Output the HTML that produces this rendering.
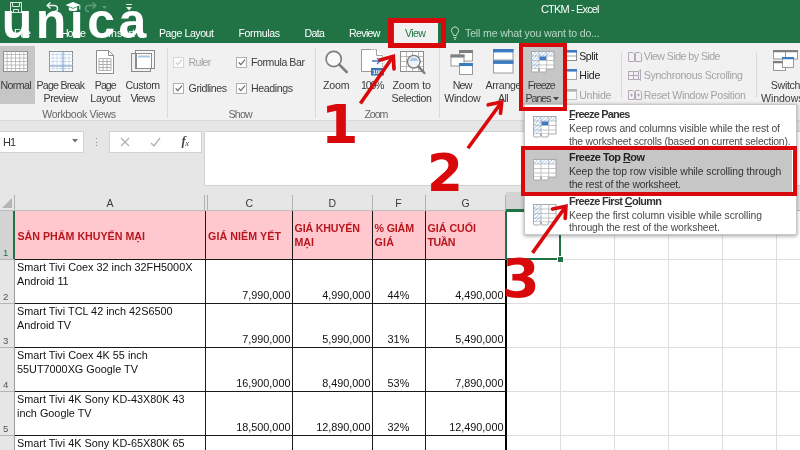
<!DOCTYPE html>
<html lang="vi"><head><meta charset="utf-8"><title>CTKM - Excel</title>
<style>
html,body{margin:0;padding:0}
body{width:800px;height:450px;overflow:hidden;position:relative;background:#fff;font-family:"Liberation Sans",sans-serif;color:#444}
.a{position:absolute}
.t{position:absolute;white-space:nowrap;line-height:1}
#wrap{position:absolute;left:0;top:0;width:800px;height:450px;overflow:hidden;filter:blur(.4px)}
svg{position:absolute;overflow:visible}
.vl{position:absolute;width:1px;background:#1a1a1a}
.hl{position:absolute;height:1px;background:#1a1a1a}
.gv{position:absolute;width:1px;background:#dedede}
.gh{position:absolute;height:1px;background:#dedede}
.sep{position:absolute;top:48px;width:1px;height:66px;background:#dadada}
.cb{position:absolute;width:9px;height:9px;border:1px solid #a6a6a6;background:#fdfdfd}
.red{position:absolute;border:4px solid #d9090b;box-sizing:border-box}
</style></head><body><div id="wrap">
<div class="a" style="left:0;top:211px;width:800px;height:239px;background:#fff"></div>
<div class="a" style="left:15px;top:211px;width:491px;height:48px;background:#ffc7ce"></div>
<div class="gv" style="left:560px;top:211px;height:239px"></div>
<div class="gv" style="left:614px;top:211px;height:239px"></div>
<div class="gv" style="left:668px;top:211px;height:239px"></div>
<div class="gv" style="left:722px;top:211px;height:239px"></div>
<div class="gv" style="left:776px;top:211px;height:239px"></div>
<div class="gh" style="left:506px;top:259px;width:294px"></div>
<div class="gh" style="left:506px;top:303px;width:294px"></div>
<div class="gh" style="left:506px;top:347px;width:294px"></div>
<div class="gh" style="left:506px;top:391px;width:294px"></div>
<div class="gh" style="left:506px;top:435px;width:294px"></div>
<div class="vl" style="left:205px;top:211px;height:239px"></div>
<div class="vl" style="left:292px;top:211px;height:239px"></div>
<div class="vl" style="left:372px;top:211px;height:239px"></div>
<div class="vl" style="left:425px;top:211px;height:239px"></div>
<div class="vl" style="left:505px;top:211px;height:239px;width:2px;background:#000"></div>
<div class="hl" style="left:15px;top:259px;width:491px"></div>
<div class="hl" style="left:15px;top:303px;width:491px"></div>
<div class="hl" style="left:15px;top:347px;width:491px"></div>
<div class="hl" style="left:15px;top:391px;width:491px"></div>
<div class="hl" style="left:15px;top:435px;width:491px"></div>
<div class="a" style="left:0;top:211px;width:14px;height:239px;background:#e6e6e6;border-right:1px solid #9b9b9b"></div>
<div class="a" style="left:0;top:211px;width:13px;height:48px;background:#d3d3d3;border-right:2px solid #217346"></div>
<div class="gh" style="left:0;top:259px;width:14px;background:#b5b5b5"></div>
<div class="gh" style="left:0;top:303px;width:14px;background:#b5b5b5"></div>
<div class="gh" style="left:0;top:347px;width:14px;background:#b5b5b5"></div>
<div class="gh" style="left:0;top:391px;width:14px;background:#b5b5b5"></div>
<div class="gh" style="left:0;top:435px;width:14px;background:#b5b5b5"></div>
<div class="t " style="left:3.0px;top:248.3px;font-size:9.6px;color:#217346;">1</div>
<div class="t " style="left:3.0px;top:292.3px;font-size:9.6px;color:#555;">2</div>
<div class="t " style="left:3.0px;top:336.3px;font-size:9.6px;color:#555;">3</div>
<div class="t " style="left:3.0px;top:380.3px;font-size:9.6px;color:#555;">4</div>
<div class="t " style="left:3.0px;top:424.3px;font-size:9.6px;color:#555;">5</div>
<div class="t " style="left:17.5px;top:231.0px;font-size:10.67px;color:#b8161d;font-weight:bold;letter-spacing:0.01px;">SẢN PHẨM KHUYẾN MẠI</div>
<div class="t " style="left:208.0px;top:231.0px;font-size:10.67px;color:#b8161d;font-weight:bold;letter-spacing:0.09px;">GIÁ NIÊM YẾT</div>
<div class="t " style="left:294.5px;top:223.3px;font-size:10.67px;color:#b8161d;font-weight:bold;letter-spacing:-0.16px;">GIÁ KHUYẾN</div>
<div class="t " style="left:294.5px;top:237.3px;font-size:10.67px;color:#b8161d;font-weight:bold;letter-spacing:-0.02px;">MẠI</div>
<div class="t " style="left:374.5px;top:223.3px;font-size:10.67px;color:#b8161d;font-weight:bold;letter-spacing:-0.15px;">% GIẢM</div>
<div class="t " style="left:374.5px;top:237.3px;font-size:10.67px;color:#b8161d;font-weight:bold;letter-spacing:0.27px;">GIÁ</div>
<div class="t " style="left:427.5px;top:223.3px;font-size:10.67px;color:#b8161d;font-weight:bold;">GIÁ CUỐI</div>
<div class="t " style="left:427.5px;top:237.3px;font-size:10.67px;color:#b8161d;font-weight:bold;letter-spacing:-0.54px;">TUẦN</div>
<div class="t " style="left:17.0px;top:261.8px;font-size:10.85px;color:#111;">Smart Tivi Coex 32 inch 32FH5000X</div>
<div class="t " style="left:17.0px;top:276.2px;font-size:10.85px;color:#111;">Android 11</div>
<div class="t " style="left:242.2px;top:290.2px;font-size:10.85px;color:#111;">7,990,000</div>
<div class="t " style="left:322.2px;top:290.2px;font-size:10.85px;color:#111;">4,990,000</div>
<div class="t " style="left:387.6px;top:290.2px;font-size:10.85px;color:#111;">44%</div>
<div class="t " style="left:455.2px;top:290.2px;font-size:10.85px;color:#111;">4,490,000</div>
<div class="t " style="left:17.0px;top:305.8px;font-size:10.85px;color:#111;">Smart Tivi TCL 42 inch 42S6500</div>
<div class="t " style="left:17.0px;top:320.2px;font-size:10.85px;color:#111;">Android TV</div>
<div class="t " style="left:242.2px;top:334.2px;font-size:10.85px;color:#111;">7,990,000</div>
<div class="t " style="left:322.2px;top:334.2px;font-size:10.85px;color:#111;">5,990,000</div>
<div class="t " style="left:387.6px;top:334.2px;font-size:10.85px;color:#111;">31%</div>
<div class="t " style="left:455.2px;top:334.2px;font-size:10.85px;color:#111;">5,490,000</div>
<div class="t " style="left:17.0px;top:349.8px;font-size:10.85px;color:#111;">Smart Tivi Coex 4K 55 inch</div>
<div class="t " style="left:17.0px;top:364.2px;font-size:10.85px;color:#111;">55UT7000XG Google TV</div>
<div class="t " style="left:236.2px;top:378.2px;font-size:10.85px;color:#111;">16,900,000</div>
<div class="t " style="left:322.2px;top:378.2px;font-size:10.85px;color:#111;">8,490,000</div>
<div class="t " style="left:387.6px;top:378.2px;font-size:10.85px;color:#111;">53%</div>
<div class="t " style="left:455.2px;top:378.2px;font-size:10.85px;color:#111;">7,890,000</div>
<div class="t " style="left:17.0px;top:393.8px;font-size:10.85px;color:#111;">Smart Tivi 4K Sony KD-43X80K 43</div>
<div class="t " style="left:17.0px;top:408.2px;font-size:10.85px;color:#111;">inch Google TV</div>
<div class="t " style="left:236.2px;top:422.2px;font-size:10.85px;color:#111;">18,500,000</div>
<div class="t " style="left:316.2px;top:422.2px;font-size:10.85px;color:#111;">12,890,000</div>
<div class="t " style="left:387.6px;top:422.2px;font-size:10.85px;color:#111;">32%</div>
<div class="t " style="left:449.2px;top:422.2px;font-size:10.85px;color:#111;">12,490,000</div>
<div class="t " style="left:17.0px;top:437.8px;font-size:10.85px;color:#111;">Smart Tivi 4K Sony KD-65X80K 65</div>
<div class="a" style="left:505px;top:210px;width:52px;height:46px;border:2px solid #217346"></div>
<div class="a" style="left:557px;top:256px;width:5px;height:5px;background:#217346;border:1px solid #fff"></div><div class="a" style="left:0;top:121px;width:800px;height:90px;background:#e6e6e6"></div>
<div class="a" style="left:0;top:210px;width:800px;height:1px;background:#bdbdbd"></div>
<div class="a" style="left:506px;top:192px;width:54px;height:17px;background:#d3d3d3;border-bottom:2px solid #217346"></div>
<div class="gv" style="left:14px;top:195px;height:15px;background:#b1b1b1"></div>
<div class="gv" style="left:204px;top:195px;height:15px;background:#b1b1b1"></div>
<div class="gv" style="left:207px;top:195px;height:15px;background:#b1b1b1"></div>
<div class="gv" style="left:292px;top:195px;height:15px;background:#b1b1b1"></div>
<div class="gv" style="left:372px;top:195px;height:15px;background:#b1b1b1"></div>
<div class="gv" style="left:425px;top:195px;height:15px;background:#b1b1b1"></div>
<div class="gv" style="left:505px;top:195px;height:15px;background:#b1b1b1"></div>
<div class="gv" style="left:560px;top:195px;height:15px;background:#b1b1b1"></div>
<div class="gv" style="left:614px;top:195px;height:15px;background:#b1b1b1"></div>
<div class="gv" style="left:668px;top:195px;height:15px;background:#b1b1b1"></div>
<div class="gv" style="left:722px;top:195px;height:15px;background:#b1b1b1"></div>
<div class="gv" style="left:776px;top:195px;height:15px;background:#b1b1b1"></div>
<div class="t " style="left:106.5px;top:198.2px;font-size:10.5px;color:#3a3a3a;">A</div>
<div class="t " style="left:245.5px;top:198.2px;font-size:10.5px;color:#3a3a3a;">C</div>
<div class="t " style="left:328.5px;top:198.2px;font-size:10.5px;color:#3a3a3a;">D</div>
<div class="t " style="left:395.3px;top:198.2px;font-size:10.5px;color:#3a3a3a;">F</div>
<div class="t " style="left:461.5px;top:198.2px;font-size:10.5px;color:#3a3a3a;">G</div>
<svg style="left:2px;top:198px" width="10" height="10"><path d="M10 0V10H0Z" fill="#b5b5b5"/></svg>
<div class="a" style="left:-1px;top:131px;width:84.5px;height:21.5px;background:#fff;border:1px solid #d2d2d2;box-sizing:border-box"></div>
<div class="t " style="left:3.0px;top:136.6px;font-size:11px;color:#333;letter-spacing:-1.06px;">H1</div>
<svg style="left:71.6px;top:139px" width="6" height="3.5"><path d="M0 0H6L3 3.5Z" fill="#707070"/></svg>
<div class="a" style="left:96px;top:138px;width:1px;height:1px;background:#8a8a8a"></div>
<div class="a" style="left:96px;top:141.5px;width:1px;height:1px;background:#8a8a8a"></div>
<div class="a" style="left:96px;top:145px;width:1px;height:1px;background:#8a8a8a"></div>
<div class="a" style="left:109px;top:131px;width:93px;height:21.5px;background:#fff;border:1px solid #d2d2d2;box-sizing:border-box"></div>
<svg style="left:120px;top:137px" width="10" height="10"><path d="M1 1L9 9M9 1L1 9" stroke="#b0b0b0" stroke-width="1.3" fill="none"/></svg>
<svg style="left:150px;top:137px" width="11" height="10"><path d="M1 6L4 9L10 1" stroke="#b0b0b0" stroke-width="1.3" fill="none"/></svg>
<div class="t " style="left:181.5px;top:135.4px;font-size:12.5px;color:#444;font-family:'Liberation Serif',serif;"><i><b>f</b></i><i style="font-size:8.5px;position:relative;top:1px;left:-.5px">x</i></div>
<div class="a" style="left:204px;top:131px;width:598px;height:54.5px;background:#fff;border:1px solid #d2d2d2;box-sizing:border-box"></div><div class="a" style="left:0;top:43px;width:800px;height:77px;background:#f1f1f1;border-bottom:1px solid #dadada"></div>
<div class="a" style="left:0;top:46px;width:35px;height:58px;background:#c6c6c6"></div>
<svg style="left:3px;top:51px" width="25" height="21"><rect x=".5" y=".5" width="24" height="20" fill="#fff" stroke="#8c8c8c"/><path d="M4.2 0V21M8.3 0V21M12.5 0V21M16.7 0V21M20.8 0V21M0 3.5H25M0 7.0H25M0 10.5H25M0 14.0H25M0 17.5H25" stroke="#a9a9a9" stroke-width=".7" fill="none"/></svg>
<div class="t " style="left:0.5px;top:79.8px;font-size:10.6px;color:#3b3b3b;letter-spacing:-0.59px;">Normal</div>
<svg style="left:49px;top:51px" width="24" height="21"><rect x=".5" y=".5" width="23" height="20" fill="#fff" stroke="#8c8c8c"/><path d="M4.0 0V21M8.0 0V21M12.0 0V21M16.0 0V21M20.0 0V21M0 3.5H24M0 7.0H24M0 10.5H24M0 14.0H24M0 17.5H24" stroke="#b9cfe6" stroke-width=".7" fill="none"/><path d="M14 0V21M0 15H24" stroke="#7a9cc6" stroke-width="1" fill="none"/></svg>
<div class="t " style="left:36.5px;top:79.8px;font-size:10.6px;color:#3b3b3b;letter-spacing:-0.76px;">Page Break</div>
<div class="t " style="left:43.6px;top:92.8px;font-size:10.6px;color:#3b3b3b;letter-spacing:-0.50px;">Preview</div>
<svg style="left:96px;top:50px" width="18" height="24"><path d="M.5 .5H12.5L17.5 5.5V23.5H.5Z" fill="#fff" stroke="#8c8c8c"/><path d="M12.5 .5V5.5H17.5" fill="none" stroke="#8c8c8c"/><path d="M3 8.5H15M3 11.5H15M3 14.5H15M3 17.5H15M3 20.5H15M3 8.5V20.5M7 8.5V20.5M11 8.5V20.5M15 8.5V20.5" stroke="#a0a0a0" stroke-width=".8" fill="none"/></svg>
<div class="t " style="left:94.8px;top:79.8px;font-size:10.6px;color:#3b3b3b;letter-spacing:-0.95px;">Page</div>
<div class="t " style="left:90.3px;top:92.8px;font-size:10.6px;color:#3b3b3b;letter-spacing:-0.30px;">Layout</div>
<svg style="left:131px;top:50px" width="24" height="23"><rect x="4.5" y=".5" width="19" height="18" fill="#f7f7f7" stroke="#8c8c8c"/><rect x=".5" y="3.5" width="19" height="18" fill="none" stroke="#8c8c8c"/><rect x="5.5" y="3.5" width="15" height="15" fill="#fff" stroke="#8c8c8c"/><rect x="7" y="5.5" width="12" height="2" fill="#a9c4e4"/></svg>
<div class="t " style="left:125.6px;top:79.8px;font-size:10.6px;color:#3b3b3b;letter-spacing:-0.42px;">Custom</div>
<div class="t " style="left:130.4px;top:92.8px;font-size:10.6px;color:#3b3b3b;letter-spacing:-0.79px;">Views</div>
<div class="t " style="left:42.3px;top:109.3px;font-size:10.6px;color:#666;letter-spacing:-0.37px;">Workbook Views</div>
<div class="sep" style="left:167px;height:70px"></div>
<div class="cb" style="left:173px;top:56.5px;border-color:#d6d6d6"></div><svg style="left:175px;top:59.0px" width="8" height="7"><path d="M.7 3.3L2.8 5.6L7 .7" stroke="#cdcdcd" stroke-width="1.1" fill="none"/></svg>
<div class="t " style="left:188.6px;top:57.3px;font-size:10.6px;color:#a3a3a3;letter-spacing:-0.63px;">Ruler</div>
<div class="cb" style="left:173px;top:82.5px;border-color:#b0b0b0"></div><svg style="left:175px;top:85.0px" width="8" height="7"><path d="M.7 3.3L2.8 5.6L7 .7" stroke="#666" stroke-width="1.1" fill="none"/></svg>
<div class="t " style="left:188.6px;top:83.3px;font-size:10.6px;color:#3b3b3b;letter-spacing:-0.43px;">Gridlines</div>
<div class="cb" style="left:235.5px;top:56.5px;border-color:#b0b0b0"></div><svg style="left:237.5px;top:59.0px" width="8" height="7"><path d="M.7 3.3L2.8 5.6L7 .7" stroke="#666" stroke-width="1.1" fill="none"/></svg>
<div class="t " style="left:251.0px;top:57.3px;font-size:10.6px;color:#3b3b3b;letter-spacing:-0.43px;">Formula Bar</div>
<div class="cb" style="left:235.5px;top:82.5px;border-color:#b0b0b0"></div><svg style="left:237.5px;top:85.0px" width="8" height="7"><path d="M.7 3.3L2.8 5.6L7 .7" stroke="#666" stroke-width="1.1" fill="none"/></svg>
<div class="t " style="left:251.0px;top:83.3px;font-size:10.6px;color:#3b3b3b;letter-spacing:-0.40px;">Headings</div>
<div class="t " style="left:228.6px;top:109.3px;font-size:10.6px;color:#666;letter-spacing:-0.83px;">Show</div>
<div class="sep" style="left:314.5px;height:70px"></div>
<svg style="left:324px;top:49px" width="25" height="25"><circle cx="9.7" cy="10" r="7.6" fill="#fafafa" stroke="#7d7d7d" stroke-width="1.6"/><path d="M15.3 15.6L22.7 23" stroke="#7d7d7d" stroke-width="2.6" stroke-linecap="round"/></svg>
<div class="t " style="left:323.0px;top:79.8px;font-size:10.6px;color:#3b3b3b;letter-spacing:-0.13px;">Zoom</div>
<svg style="left:361px;top:49px" width="23" height="27"><path d="M.5 .5H15.5L21.5 6.5V22.5H.5Z" fill="#fff" stroke="none"/><path d="M9 .5H.5V22.5H10" fill="none" stroke="#9a9a9a"/><path d="M9 .5H15.5M21.5 6.5V19" fill="none" stroke="#a3a3a3" stroke-dasharray="1.5 1"/><path d="M15.5 .5V6.5H21.5" fill="none" stroke="#a3a3a3"/><path d="M11 12H19M16 9L19 12L16 15" stroke="#3b7bc4" stroke-width="1.3" fill="none"/><rect x="10" y="19" width="13" height="7.5" fill="#3b74b8"/><text x="16.5" y="25.2" font-size="6" font-family="Liberation Sans,sans-serif" font-weight="bold" fill="#fff" text-anchor="middle">100</text></svg>
<div class="t " style="left:361.0px;top:79.8px;font-size:10.6px;color:#3b3b3b;letter-spacing:-1.20px;">100%</div>
<svg style="left:399px;top:50px" width="27" height="25"><rect x="1.5" y="1.5" width="23" height="20" fill="#fff" stroke="#8c8c8c"/><path d="M1.5 6.5H24.5M1.5 11.5H24.5M1.5 16.5H24.5M7.5 1.5V21.5M13.5 1.5V21.5M19.5 1.5V21.5" stroke="#a9a9a9" stroke-width=".8" fill="none"/><circle cx="14.8" cy="11.7" r="6.3" fill="#eef3f9" stroke="#7d7d7d" stroke-width="1.4"/><path d="M10.5 11A4.5 4.5 0 0 1 19.1 11Z" fill="#a9c4e4"/><path d="M19.3 16.4L25.4 23" stroke="#7d7d7d" stroke-width="2.4" stroke-linecap="round"/></svg>
<div class="t " style="left:392.4px;top:79.8px;font-size:10.6px;color:#3b3b3b;letter-spacing:-0.04px;">Zoom to</div>
<div class="t " style="left:391.5px;top:92.8px;font-size:10.6px;color:#3b3b3b;letter-spacing:-0.39px;">Selection</div>
<div class="t " style="left:364.5px;top:109.3px;font-size:10.6px;color:#666;letter-spacing:-1.10px;">Zoom</div>
<div class="sep" style="left:438.5px;height:70px"></div>
<svg style="left:450px;top:49px" width="24" height="27"><rect x="9.5" y="1.5" width="13" height="10.5" fill="#fff" stroke="#8f8f8f" stroke-width=".9"/><rect x="9.05" y="1.05" width="13.9" height="3" fill="#7f7f7f"/><rect x="1" y="6" width="13" height="11" fill="#fff" stroke="#8f8f8f" stroke-width=".9"/><rect x="0.55" y="5.55" width="13.9" height="3" fill="#7f7f7f"/><rect x="9.5" y="14.5" width="13" height="11" fill="#fff" stroke="#8f8f8f" stroke-width=".9"/><rect x="9.05" y="14.05" width="13.9" height="3" fill="#3b7bc4"/></svg>
<div class="t " style="left:452.8px;top:79.8px;font-size:10.6px;color:#3b3b3b;letter-spacing:-0.85px;">New</div>
<div class="t " style="left:444.2px;top:92.8px;font-size:10.6px;color:#3b3b3b;letter-spacing:-0.22px;">Window</div>
<svg style="left:493px;top:49px" width="21" height="25"><rect x=".5" y=".5" width="19.5" height="10.5" fill="#fff" stroke="#9a9a9a"/><rect x=".5" y="12" width="19.5" height="12" fill="#fff" stroke="#9a9a9a"/><rect x="0" y="0" width="20.5" height="3.4" fill="#3b7bc4"/><rect x="0" y="11.5" width="20.5" height="3.4" fill="#3b7bc4"/></svg>
<div class="t " style="left:485.6px;top:79.8px;font-size:10.6px;color:#3b3b3b;letter-spacing:-0.30px;">Arrange</div>
<div class="t " style="left:498.0px;top:92.8px;font-size:10.6px;color:#3b3b3b;letter-spacing:-0.54px;">All</div>
<div class="a" style="left:522px;top:46px;width:42px;height:59.5px;background:#c6c6c6"></div>
<svg style="left:530.5px;top:51px" width="24" height="22"><rect x=".5" y=".5" width="22.5" height="17.5" fill="#fff" stroke="#a2a2a2" stroke-width=".9"/><path d="M0 5H23.5M0 9.5H23.5M0 14H23.5M8 0V18M15.7 0V18" stroke="#b4b4b4" stroke-width=".8" fill="none"/><path d="M0.5 1.5L1.5 0.5M0.6 5.0L5.1 0.5M4.2 5.0L8.7 0.5M7.8 5.0L12.3 0.5M11.4 5.0L15.9 0.5M15.0 5.0L19.5 0.5M18.6 5.0L23.0 0.6M22.2 5.0L23.0 4.2" stroke="#86b0e0" stroke-width=".8" fill="none"/><path d="M0.5 6.0L1.5 5.0M0.5 9.6L5.1 5.0M0.5 13.2L8.0 5.7M0.5 16.8L8.0 9.3M2.9 18.0L8.0 12.9M6.5 18.0L8.0 16.5" stroke="#86b0e0" stroke-width=".8" fill="none"/><rect x="8.5" y="5.5" width="6.8" height="3.6" fill="#3b7bc4"/><path d="M.5 18V20Q.5 21 1.5 21H6.5Q7.5 21 7.5 20V18M8.5 18V20Q8.5 21 9.5 21H14.2Q15.2 21 15.2 20V18" fill="#fff" stroke="#a2a2a2" stroke-width=".9"/></svg>
<div class="t " style="left:527.7px;top:79.8px;font-size:10.6px;color:#3b3b3b;letter-spacing:-0.98px;">Freeze</div>
<div class="t " style="left:525.6px;top:92.8px;font-size:10.6px;color:#3b3b3b;letter-spacing:-1.04px;">Panes</div>
<svg style="left:553px;top:97px" width="6" height="3.5"><path d="M0 0H6L3 3.5Z" fill="#444"/></svg>
<svg style="left:565px;top:50px" width="12" height="11"><rect x=".5" y=".5" width="11" height="10" fill="#fff" stroke="#8c8c8c"/><rect x="0" y="0" width="12" height="2.6" fill="#3b7bc4"/><path d="M0 6H12" stroke="#8c8c8c" stroke-width=".8"/></svg>
<div class="t " style="left:579.2px;top:50.8px;font-size:10.6px;color:#222;letter-spacing:-0.40px;">Split</div>
<svg style="left:565px;top:69px" width="12" height="11"><rect x=".5" y=".5" width="11" height="10" fill="#fff" stroke="#a6a6a6"/><rect x="0" y="0" width="12" height="2.6" fill="#3b7bc4"/></svg>
<div class="t " style="left:579.2px;top:70.1px;font-size:10.6px;color:#222;letter-spacing:-0.17px;">Hide</div>
<svg style="left:565px;top:89px" width="12" height="11"><rect x=".5" y=".5" width="11" height="10" fill="#f8f8f8" stroke="#c0c0c0"/><rect x="0" y="0" width="12" height="2.6" fill="#b0b0b0"/></svg>
<div class="t " style="left:579.2px;top:89.8px;font-size:10.6px;color:#a3a3a3;letter-spacing:-0.26px;">Unhide</div>
<div class="sep" style="left:621px;top:52px;height:46px"></div>
<svg style="left:627.5px;top:50.5px" width="14" height="11" fill="none" stroke="#b4a9b8" stroke-width="1"><path d="M.5 1.5H4.5L6.5 3V10.5H.5ZM7.5 1.5H11.5L13.5 3V10.5H7.5Z"/></svg>
<div class="t " style="left:643.8px;top:50.8px;font-size:10.6px;color:#a3a3a3;letter-spacing:-0.53px;">View Side by Side</div>
<svg style="left:627.5px;top:69px" width="14" height="12" fill="none" stroke="#b4a9b8" stroke-width="1"><rect x=".5" y="2.5" width="10" height="8"/><path d="M.5 6.5H10.5M5.5 2.5V10.5M12.5 .5V11.5M11 2L12.5 .5M11 10L12.5 11.5"/></svg>
<div class="t " style="left:643.8px;top:70.1px;font-size:10.6px;color:#a3a3a3;letter-spacing:-0.31px;">Synchronous Scrolling</div>
<svg style="left:627.5px;top:89px" width="14" height="11" fill="none" stroke="#b4a9b8" stroke-width="1"><path d="M.5 1.5H4.5L6.5 3V10.5H.5ZM7.5 1.5H11.5L13.5 3V10.5H7.5ZM2 6H5M3.5 4.5V7.5M9 6H12M10.5 4.5V7.5"/></svg>
<div class="t " style="left:643.8px;top:89.8px;font-size:10.6px;color:#a3a3a3;letter-spacing:-0.34px;">Reset Window Position</div>
<div class="sep" style="left:756px;top:52px;height:46px"></div>
<svg style="left:773px;top:50px" width="25" height="22"><rect x="0.5" y="0.5" width="12" height="8.5" fill="#fff" stroke="#8f8f8f" stroke-width=".9"/><rect x="0.04999999999999999" y="0.04999999999999999" width="12.9" height="2.2" fill="#7f7f7f"/><rect x="12.5" y="0.5" width="12" height="8.5" fill="#fff" stroke="#8f8f8f" stroke-width=".9"/><rect x="12.05" y="0.04999999999999999" width="12.9" height="2.2" fill="#7f7f7f"/><rect x="0.5" y="11.5" width="12" height="9" fill="#fff" stroke="#8f8f8f" stroke-width=".9"/><rect x="0.04999999999999999" y="11.05" width="12.9" height="2.2" fill="#7f7f7f"/><rect x="9.5" y="7.5" width="11" height="10" fill="#fff" stroke="#8f8f8f" stroke-width=".9"/><rect x="9.05" y="7.05" width="11.9" height="2.2" fill="#3b7bc4"/></svg>
<div class="t " style="left:770.8px;top:79.8px;font-size:10.6px;color:#3b3b3b;letter-spacing:-0.30px;">Switch</div>
<div class="t " style="left:761.0px;top:92.8px;font-size:10.6px;color:#3b3b3b;letter-spacing:-0.08px;">Windows</div><div class="a" style="left:0;top:0;width:800px;height:43px;background:#217346"></div>
<div class="t " style="left:541.0px;top:4.1px;font-size:11px;color:#fff;letter-spacing:-0.85px;">CTKM - Excel</div>
<svg style="left:10px;top:2px" width="12" height="11" fill="none" stroke="#d9e8df" stroke-width="1"><rect x=".5" y=".5" width="11" height="10"/><path d="M2.5 .5V4.5H9.5V.5M3.5 10.5V7.5H8.5V10.5"/></svg>
<svg style="left:46px;top:2px" width="13" height="10" fill="none" stroke="#e6f0ea" stroke-width="1.5"><path d="M1 3.5H8Q11.5 3.5 11.5 6.5Q11.5 9.5 8 9.5"/><path d="M4.5 .5L1.2 3.5L4.5 6.5"/></svg>
<svg style="left:84px;top:2px" width="13" height="10" fill="none" stroke="#5f9b7a" stroke-width="1.5"><path d="M12 3.5H5Q1.5 3.5 1.5 6.5Q1.5 9.5 5 9.5"/><path d="M8.5 .5L11.8 3.5L8.5 6.5"/></svg>
<svg style="left:102px;top:6px" width="5" height="3"><path d="M0 0H5L2.5 3Z" fill="#5f9b7a"/></svg>
<svg style="left:126px;top:4px" width="6" height="7"><path d="M0 .5H6" stroke="#e6f0ea" stroke-width="1"/><path d="M0 3H6L3 6.5Z" fill="#e6f0ea"/></svg>
<div class="t " style="left:14.0px;top:27.8px;font-size:10.6px;color:#fff;letter-spacing:-0.03px;">File</div>
<div class="t " style="left:61.0px;top:27.8px;font-size:10.6px;color:#fff;letter-spacing:-1.09px;">Home</div>
<div class="t " style="left:108.0px;top:27.8px;font-size:10.6px;color:#fff;letter-spacing:0.10px;">Insert</div>
<div class="t " style="left:159.0px;top:27.8px;font-size:10.6px;color:#fff;letter-spacing:-0.45px;">Page Layout</div>
<div class="t " style="left:238.5px;top:27.8px;font-size:10.6px;color:#fff;letter-spacing:-0.38px;">Formulas</div>
<div class="t " style="left:304.5px;top:27.8px;font-size:10.6px;color:#fff;letter-spacing:-0.63px;">Data</div>
<div class="t " style="left:349.0px;top:27.8px;font-size:10.6px;color:#fff;letter-spacing:-0.65px;">Review</div>
<div class="a" style="left:394px;top:23px;width:44px;height:21px;background:#f1f1f1"></div>
<div class="t " style="left:405.0px;top:28.3px;font-size:10.6px;color:#217346;letter-spacing:-0.59px;">View</div>
<svg style="left:450px;top:26px" width="10" height="14" fill="none" stroke="#c2dacc" stroke-width="1"><path d="M3.5 9.5Q3.5 8 2.2 6.8A3.6 3.6 0 1 1 7.8 6.8Q6.5 8 6.5 9.5Z"/><path d="M3.5 11.5H6.5M4 13.2H6"/></svg>
<div class="t " style="left:465.0px;top:28.3px;font-size:10.6px;color:#b9d6c6;letter-spacing:-0.17px;">Tell me what you want to do...</div>
<div class="t" id="logo" style="left:1.7px;top:-4.3px;font-size:50px;font-weight:bold;color:#fff;letter-spacing:3.5px">unica</div>
<div class="a" style="left:64px;top:0;width:20px;height:11.5px;background:#217346"></div>
<svg style="left:65px;top:2px" width="17" height="10"><path d="M8 0L15.5 3L8 6L.5 3Z" fill="#fff"/><path d="M3.8 5V8.2Q8 10 12.2 8.2V5L8 6.8Z" fill="#fff"/><path d="M14.8 3.3V7.5" stroke="#fff" stroke-width="1"/></svg><div class="a" style="left:524px;top:104px;width:273px;height:131px;background:#fff;border:1px solid #c8c8c8;box-sizing:border-box;box-shadow:0 1px 4px rgba(0,0,0,.38)"></div>
<div class="a" style="left:524px;top:150px;width:268px;height:42px;background:#c6c6c6"></div>
<svg style="left:532.5px;top:116px" width="24" height="22"><rect x=".5" y=".5" width="22.5" height="17.5" fill="#fff" stroke="#a2a2a2" stroke-width=".9"/><path d="M0 5H23.5M0 9.5H23.5M0 14H23.5M8 0V18M15.7 0V18" stroke="#b4b4b4" stroke-width=".8" fill="none"/><path d="M0.5 1.5L1.5 0.5M0.6 5.0L5.1 0.5M4.2 5.0L8.7 0.5M7.8 5.0L12.3 0.5M11.4 5.0L15.9 0.5M15.0 5.0L19.5 0.5M18.6 5.0L23.0 0.6M22.2 5.0L23.0 4.2" stroke="#86b0e0" stroke-width=".8" fill="none"/><path d="M0.5 6.0L1.5 5.0M0.5 9.6L5.1 5.0M0.5 13.2L8.0 5.7M0.5 16.8L8.0 9.3M2.9 18.0L8.0 12.9M6.5 18.0L8.0 16.5" stroke="#86b0e0" stroke-width=".8" fill="none"/><rect x="8.5" y="5.5" width="6.8" height="3.6" fill="#3b7bc4"/><path d="M.5 18V20Q.5 21 1.5 21H6.5Q7.5 21 7.5 20V18M8.5 18V20Q8.5 21 9.5 21H14.2Q15.2 21 15.2 20V18" fill="#fff" stroke="#a2a2a2" stroke-width=".9"/></svg>
<div class="t " style="left:569.0px;top:109.0px;font-size:10.9px;color:#333;font-weight:bold;letter-spacing:-0.75px;"><u>F</u>reeze Panes</div>
<div class="t " style="left:569.0px;top:123.9px;font-size:10.4px;color:#4a4a4a;letter-spacing:-0.16px;">Keep rows and columns visible while the rest of</div>
<div class="t " style="left:569.0px;top:136.5px;font-size:10.4px;color:#4a4a4a;letter-spacing:-0.20px;">the worksheet scrolls (based on current selection).</div>
<svg style="left:532.5px;top:159px" width="24" height="22"><rect x=".5" y=".5" width="22.5" height="17.5" fill="#fff" stroke="#a2a2a2" stroke-width=".9"/><path d="M0 5H23.5M0 9.5H23.5M0 14H23.5M8 0V18M15.7 0V18" stroke="#b4b4b4" stroke-width=".8" fill="none"/><path d="M0.5 1.5L1.5 0.5M0.6 5.0L5.1 0.5M4.2 5.0L8.7 0.5M7.8 5.0L12.3 0.5M11.4 5.0L15.9 0.5M15.0 5.0L19.5 0.5M18.6 5.0L23.0 0.6M22.2 5.0L23.0 4.2" stroke="#86b0e0" stroke-width=".8" fill="none"/><path d="M.5 18V20Q.5 21 1.5 21H6.5Q7.5 21 7.5 20V18M8.5 18V20Q8.5 21 9.5 21H14.2Q15.2 21 15.2 20V18" fill="#fff" stroke="#a2a2a2" stroke-width=".9"/></svg>
<div class="t " style="left:569.0px;top:152.3px;font-size:10.9px;color:#222;font-weight:bold;letter-spacing:-0.52px;">Freeze Top <u>R</u>ow</div>
<div class="t " style="left:569.0px;top:167.4px;font-size:10.4px;color:#333;letter-spacing:-0.08px;">Keep the top row visible while scrolling through</div>
<div class="t " style="left:569.0px;top:180.4px;font-size:10.4px;color:#333;letter-spacing:-0.19px;">the rest of the worksheet.</div>
<svg style="left:532.5px;top:204px" width="24" height="22"><rect x=".5" y=".5" width="22.5" height="17.5" fill="#fff" stroke="#a2a2a2" stroke-width=".9"/><path d="M0 5H23.5M0 9.5H23.5M0 14H23.5M8 0V18M15.7 0V18" stroke="#b4b4b4" stroke-width=".8" fill="none"/><path d="M0.5 1.5L1.5 0.5M0.5 5.1L5.1 0.5M0.5 8.7L8.0 1.2M0.5 12.3L8.0 4.8M0.5 15.9L8.0 8.4M2.0 18.0L8.0 12.0M5.6 18.0L8.0 15.6" stroke="#86b0e0" stroke-width=".8" fill="none"/><path d="M.5 18V20Q.5 21 1.5 21H6.5Q7.5 21 7.5 20V18M8.5 18V20Q8.5 21 9.5 21H14.2Q15.2 21 15.2 20V18" fill="#fff" stroke="#a2a2a2" stroke-width=".9"/></svg>
<div class="t " style="left:569.0px;top:195.9px;font-size:10.9px;color:#333;font-weight:bold;letter-spacing:-0.65px;">Freeze First <u>C</u>olumn</div>
<div class="t " style="left:569.0px;top:211.3px;font-size:10.4px;color:#4a4a4a;letter-spacing:-0.09px;">Keep the first column visible while scrolling</div>
<div class="t " style="left:569.0px;top:223.1px;font-size:10.4px;color:#4a4a4a;letter-spacing:-0.12px;">through the rest of the worksheet.</div><div class="red" style="left:388px;top:18px;width:58px;height:30px;border-width:5.5px"></div>
<div class="red" style="left:519px;top:43.3px;width:48px;height:67.5px;border-width:4.2px"></div>
<div class="red" style="left:521px;top:145.6px;width:275.5px;height:50.80000000000001px;border-width:4.5px"></div>
<svg style="left:0;top:0" width="800" height="450"><path d="M360.4 103.5L393.3 56.3" stroke="#d9090b" stroke-width="3.6" fill="none" stroke-linecap="butt"/><path d="M380 60L393.3 56.3L394 68.8" stroke="#d9090b" stroke-width="3.7" fill="none" stroke-linecap="round" stroke-linejoin="miter"/><path d="M467.9 148.2L501.7 102" stroke="#d9090b" stroke-width="3.6" fill="none" stroke-linecap="butt"/><path d="M488.2 104.8L501.7 102L500.5 113.2" stroke="#d9090b" stroke-width="3.7" fill="none" stroke-linecap="round" stroke-linejoin="miter"/><path d="M532.5 252.9L565.9 206.2" stroke="#d9090b" stroke-width="3.6" fill="none" stroke-linecap="butt"/><path d="M552.6 209L565.9 206.2L565.2 218.3" stroke="#d9090b" stroke-width="3.7" fill="none" stroke-linecap="round" stroke-linejoin="miter"/></svg>
<div class="t" id="big1" style="left:321px;top:97.7px;font-family:'DejaVu Sans','Liberation Sans',sans-serif;font-weight:bold;font-size:53.9px;color:#d9090b">1</div>
<div class="t" id="big2" style="left:427px;top:148.2px;font-family:'DejaVu Sans','Liberation Sans',sans-serif;font-weight:bold;font-size:51.7px;color:#d9090b">2</div>
<div class="t" id="big3" style="left:502px;top:252.3px;font-family:'DejaVu Sans','Liberation Sans',sans-serif;font-weight:bold;font-size:54.0px;color:#d9090b">3</div>
</div></body></html>
